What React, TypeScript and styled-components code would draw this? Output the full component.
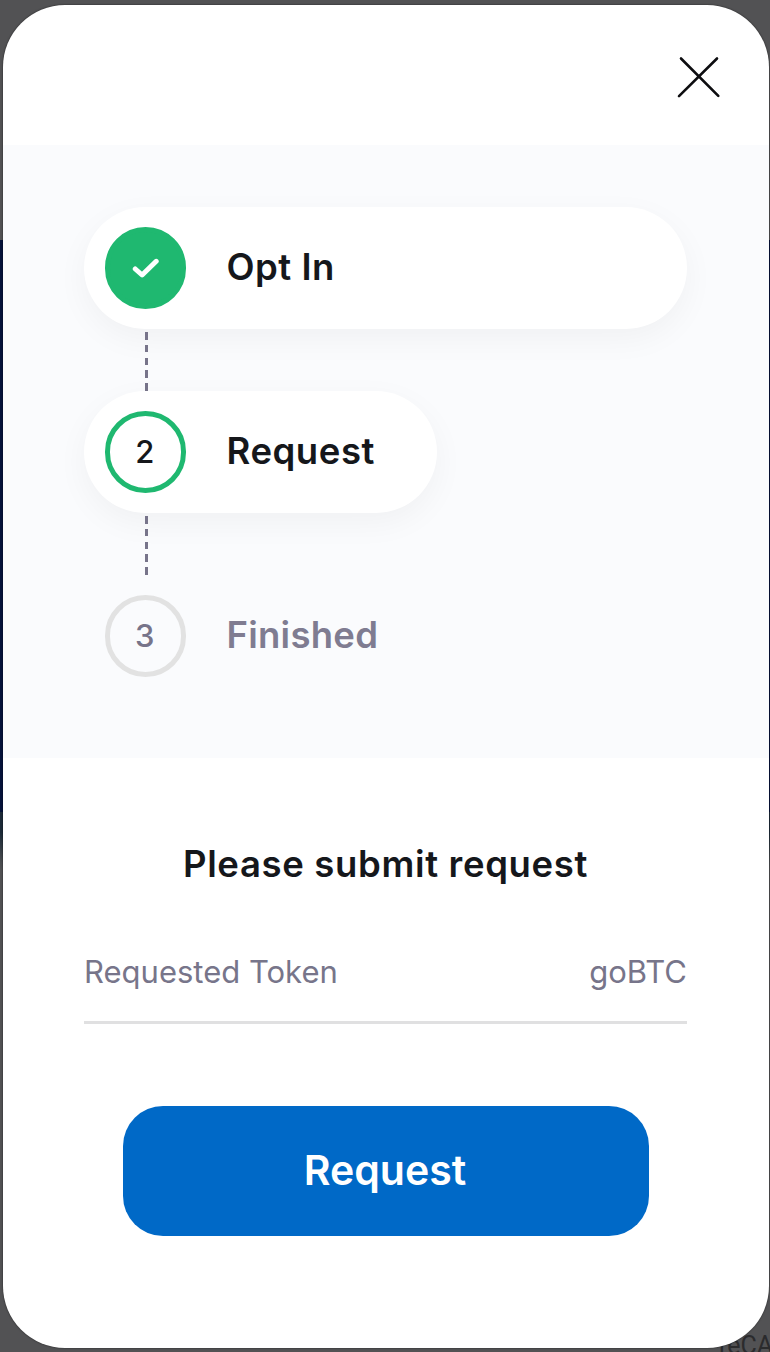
import React from "react";
import styled, { createGlobalStyle, css } from "styled-components";

const GlobalStyle = createGlobalStyle`
  *, *::before, *::after { box-sizing: border-box; }
  body { margin: 0; font-family: Inter, "Liberation Sans", sans-serif; }
`;

const Backdrop = styled.div`
  position: relative;
  height: 1352px;
  padding: 5px 1.5px 4px 2.5px;
  overflow: hidden;
  background: linear-gradient(#525254 0 240px, #05123a 240px 812px, #1c2a38 812px 832px, #4b4d50 862px, #525254 870px);
`;

const BackdropText = styled.span`
  position: absolute;
  left: 719px;
  top: 1332px;
  font: 400 25px/28px Roboto, sans-serif;
  color: #2b2b2d;
`;

const Dialog = styled.main`
  position: relative;
  display: flex;
  flex-direction: column;
  height: 1343px;
  border-radius: 62px;
  background: #fff;
  box-shadow: 0 0 2px rgba(0, 0, 0, 0.65);
  overflow: hidden;
`;

const Header = styled.header`
  display: flex;
  flex: none;
  justify-content: flex-end;
  height: 140px;
  padding: 50px 47.5px 0 0;
`;

const CloseButton = styled.button`
  width: 44px;
  height: 44px;
  padding: 0;
  border: 0;
  background: none;
`;

const Steps = styled.section`
  display: flex;
  flex: none;
  flex-direction: column;
  align-items: flex-start;
  height: 613px;
  padding: 62px 81.5px 0;
  background: #fafbfd;
`;

type State = "done" | "active" | "pending";

const Step = styled.div<{ $state: State }>`
  display: flex;
  flex: none;
  align-items: center;
  gap: 40.5px;
  width: ${({ $state }) => ($state === "active" ? "353px" : "100%")};
  height: 122px;
  padding-left: 20.5px;
  border-radius: 61px;
  ${({ $state }) =>
    $state !== "pending" &&
    css`
      background: #fff;
      box-shadow: 0 10px 32px rgba(20, 22, 26, 0.045);
    `}
`;

const Marker = styled.div<{ $state: State }>`
  display: flex;
  flex: none;
  align-items: center;
  justify-content: center;
  width: 81.5px;
  height: 81.5px;
  border: 5px solid ${({ $state }) => ($state === "pending" ? "#e2e2e2" : "#1fb870")};
  border-radius: 50%;
  background: ${({ $state }) => ($state === "done" ? "#1fb870" : "transparent")};
  color: ${({ $state }) => ($state === "pending" ? "#77748a" : "#15171b")};
  font-size: 31px;
  font-weight: 500;
  line-height: 36px;
  padding: 0 1px 1px 0;
`;

const StepLabel = styled.span<{ $muted: boolean; $spacing: number }>`
  margin-top: -3px;
  color: ${({ $muted }) => ($muted ? "#7f7c91" : "#15171b")};
  font-size: 36.5px;
  font-weight: 600;
  line-height: 44px;
  letter-spacing: ${({ $spacing }) => $spacing}px;
  white-space: nowrap;
`;

const Connector = styled.div`
  flex: none;
  width: 3px;
  height: 59px;
  margin: 3px 0 0 61px;
  background: repeating-linear-gradient(#77748a 0 7.7px, transparent 7.7px 12.8px);
`;

const Request = styled.section`
  display: flex;
  flex-direction: column;
  align-items: center;
  padding: 82px 81.5px 0;
`;

const Title = styled.h1`
  margin: 0;
  color: #15171b;
  font-size: 36.5px;
  font-weight: 600;
  line-height: 48px;
  letter-spacing: 0.65px;
  white-space: nowrap;
`;

const Field = styled.div`
  display: flex;
  justify-content: space-between;
  width: 603px;
  height: 84px;
  margin-top: 52px;
  padding-top: 12px;
  border-bottom: 3px solid #e0e0e1;
  color: #77758a;
  font-size: 31px;
  line-height: 40px;
`;

const SubmitButton = styled.button`
  width: 526px;
  height: 130px;
  margin-top: 81.5px;
  padding: 0 1px 2px 0;
  border: 0;
  border-radius: 40px;
  background: #0069c7;
  color: #fff;
  font: 600 41px/50px Inter, sans-serif;
`;

const steps: { label: string; state: State; spacing: number }[] = [
  { label: "Opt In", state: "done", spacing: 0.5 },
  { label: "Request", state: "active", spacing: 0.55 },
  { label: "Finished", state: "pending", spacing: 0.25 },
];

export default function App() {
  return (
    <Backdrop>
      <GlobalStyle />
      <BackdropText>reCA</BackdropText>
      <Dialog>
        <Header>
          <CloseButton aria-label="Close">
            <svg width="44" height="44" viewBox="0 0 44 44" fill="none" stroke="#0d0d10" strokeWidth="2.6" strokeLinecap="round">
              <path d="M4 3.5 41.3 40.8M40 3.5 2 41.1" />
            </svg>
          </CloseButton>
        </Header>
        <Steps>
          {steps.map(({ label, state, spacing }, i) => (
            <React.Fragment key={label}>
              {i > 0 && <Connector />}
              <Step $state={state}>
                <Marker $state={state}>
                  {state === "done" ? (
                    <svg width="28" height="22" viewBox="0 0 28 22" fill="none" stroke="#fff" strokeWidth="5" strokeLinecap="round" strokeLinejoin="round">
                      <path d="M4.3 12 11.1 18 25.2 4.3" />
                    </svg>
                  ) : (
                    i + 1
                  )}
                </Marker>
                <StepLabel $muted={state === "pending"} $spacing={spacing}>{label}</StepLabel>
              </Step>
            </React.Fragment>
          ))}
        </Steps>
        <Request>
          <Title>Please submit request</Title>
          <Field>
            <span>Requested Token</span>
            <span>goBTC</span>
          </Field>
          <SubmitButton>Request</SubmitButton>
        </Request>
      </Dialog>
    </Backdrop>
  );
}
